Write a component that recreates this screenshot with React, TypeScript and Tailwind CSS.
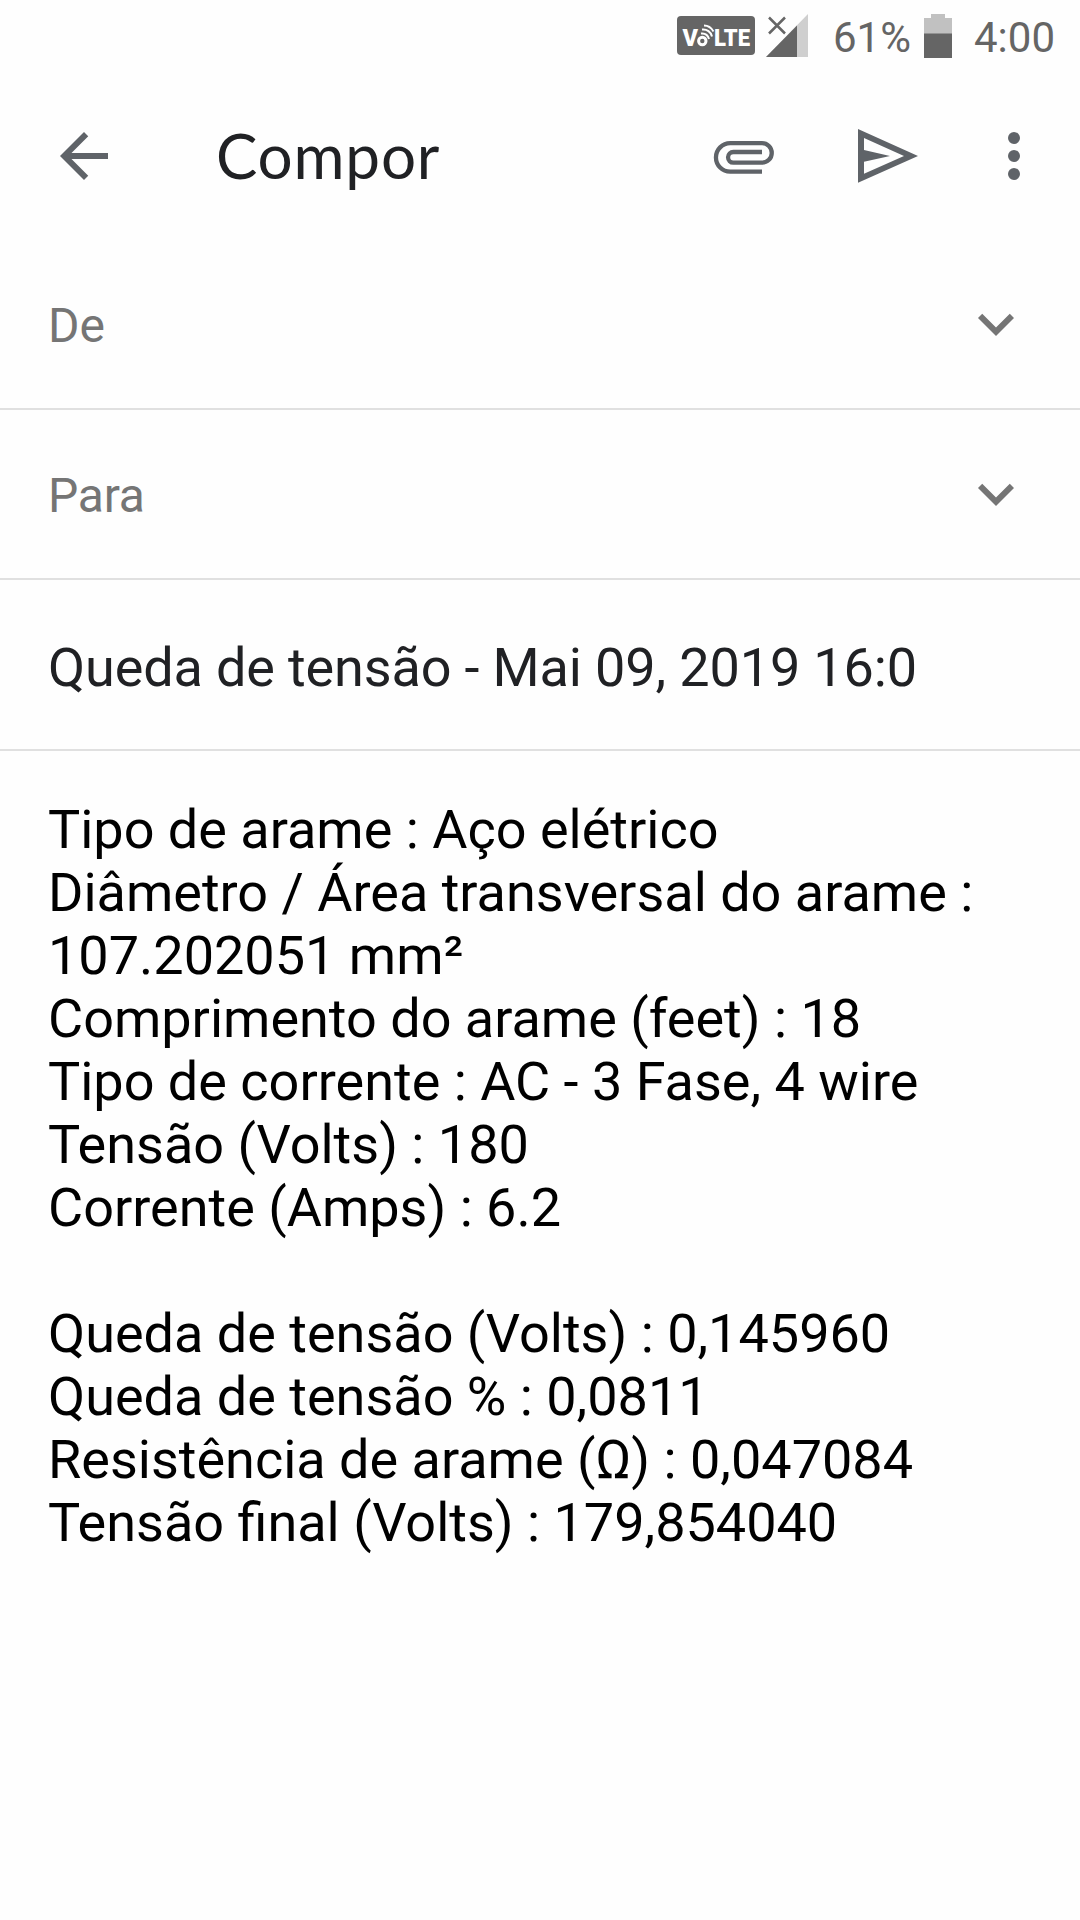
import { ReactNode } from "react";

const body = [
  "Tipo de arame : Aço elétrico",
  "Diâmetro / Área transversal do arame :",
  "107.202051 mm²",
  "Comprimento do arame (feet) : 18",
  "Tipo de corrente : AC - 3 Fase, 4 wire",
  "Tensão (Volts) : 180",
  "Corrente (Amps) : 6.2",
  "",
  "Queda de tensão (Volts) : 0,145960",
  "Queda de tensão % : 0,0811",
  "Resistência de arame (Ω) : 0,047084",
  "Tensão final (Volts) : 179,854040",
];

function VolteBadge() {
  return (
    <svg className="h-[39px] w-[78px]" viewBox="0 0 78 39">
      <rect width="78" height="39" rx="4" fill="#656565" />
      <g
        fill="#fff"
        fontFamily="Roboto, sans-serif"
        fontWeight="900"
        fontSize="23"
      >
        <text x="5.5" y="29.5" textLength="15.5" lengthAdjust="spacingAndGlyphs">
          V
        </text>
        <text x="37" y="29.5" textLength="36" lengthAdjust="spacingAndGlyphs">
          LTE
        </text>
      </g>
      <g fill="none" stroke="#fff">
        <circle cx="25.300" cy="25" r="3.700" strokeWidth="3" />
        <path d="M24 17.500c4-.5 7 2 8 5.500" strokeWidth="2" />
        <path d="M25 13.500c5-.5 9 2.500 10 7" strokeWidth="2" />
        <path d="M27 9.500c4 0 7.500 2.500 9.500 6" strokeWidth="1.800" />
      </g>
    </svg>
  );
}

function StatusBar() {
  return (
    <div className="flex h-[72px] items-start pl-[677px] text-[42px] leading-[50px] text-[#656565]">
      <div className="mt-4">
        <VolteBadge />
      </div>
      <svg className="mt-[14px] ml-[11px] h-[43px] w-[42px]" viewBox="0 0 42 43">
        <path d="M42 0v43H0z" fill="#cfcfcf" />
        <path d="M31 11.500V43H0z" fill="#656565" />
        <path d="M3 3.500l16 16M19 3.500l-16 16" stroke="#656565" strokeWidth="2.500" />
      </svg>
      <span className="mt-[13px] ml-[25px] w-[82px]">61%</span>
      <svg className="mt-[14px] ml-[9px] h-11 w-7" viewBox="0 0 28 44">
        <path d="M7 0h14v4h7v16H0V4h7z" fill="#c1c1c1" />
        <path d="M0 19.500h28V44H0z" fill="#656565" />
      </svg>
      <span className="mt-[13px] ml-[22px]">4:00</span>
    </div>
  );
}

function Toolbar() {
  return (
    <div className="flex h-[168px] items-center pl-12 text-[#5f6368]">
      <svg className="size-[72px]" viewBox="0 0 24 24" fill="currentColor">
        <path d="M20 11H7.830l5.590-5.590L12 4l-8 8 8 8 1.410-1.410L7.830 13H20z" />
      </svg>
      <h1 className="ml-24 w-[492px] pb-[2px] font-[Lato] text-[62px] leading-[72px] tracking-[0.8px] text-[#202124]">
        Compor
      </h1>
      <svg className="size-[72px]" viewBox="0 0 72 72" fill="none">
        <path
          d="M54 51.700H22.200a14.250 14.250 0 0 1 0-28.500H54a9.750 9.750 0 0 1 0 19.500H25.400a5.350 5.350 0 0 1 0-10.700H54"
          stroke="currentColor"
          strokeWidth="4.300"
        />
      </svg>
      <svg className="ml-[72px] size-[72px]" viewBox="0 0 72 72" fill="currentColor">
        <path
          fillRule="evenodd"
          d="M6 9l60 27L6 62.700zM12 18v12l26 6-26 5.700v12L52 36z"
        />
      </svg>
      <svg className="ml-[54px] size-[72px]" viewBox="0 0 72 72" fill="currentColor">
        <circle cx="36" cy="18" r="6" />
        <circle cx="36" cy="36" r="6" />
        <circle cx="36" cy="54" r="6" />
      </svg>
    </div>
  );
}

interface FieldProps {
  children: ReactNode;
  className?: string;
}
function Field({ children, className }: FieldProps) {
  return (
    <div
      className={
        className +
        " flex items-center justify-between border-b-2 border-[#e0e0e0] pr-12 pl-12"
      }
    >
      {children}
    </div>
  );
}

function Chevron() {
  return (
    <svg className="size-[72px]" viewBox="0 0 24 24" fill="currentColor">
      <path d="M16.590 8.590L12 13.170 7.410 8.590 6 10l6 6 6-6z" />
    </svg>
  );
}

export default function App() {
  return (
    <div className="h-[1920px] w-[1080px] overflow-hidden bg-[#fefefe] font-[Roboto,sans-serif]">
      <StatusBar />
      <Toolbar />
      <Field className="h-[170px] text-5xl text-[#757575]">
        <span className="pt-1">De</span>
        <Chevron />
      </Field>
      <Field className="h-[170px] text-5xl text-[#757575]">
        <span className="pt-1 tracking-[-0.25px]">Para</span>
        <Chevron />
      </Field>
      <Field className="h-[171px] text-[54px] text-[#202124]">
        <span className="pt-[5px] tracking-[-0.14px]">
          Queda de tensão - Mai 09, 2019 16:0
        </span>
      </Field>
      <div className="px-12 pt-[47px] text-[54px] leading-[63px] text-black">
        {body.map((line, i) => (
          <p key={i} className="h-[63px] whitespace-nowrap">
            {line}
          </p>
        ))}
      </div>
    </div>
  );
}
